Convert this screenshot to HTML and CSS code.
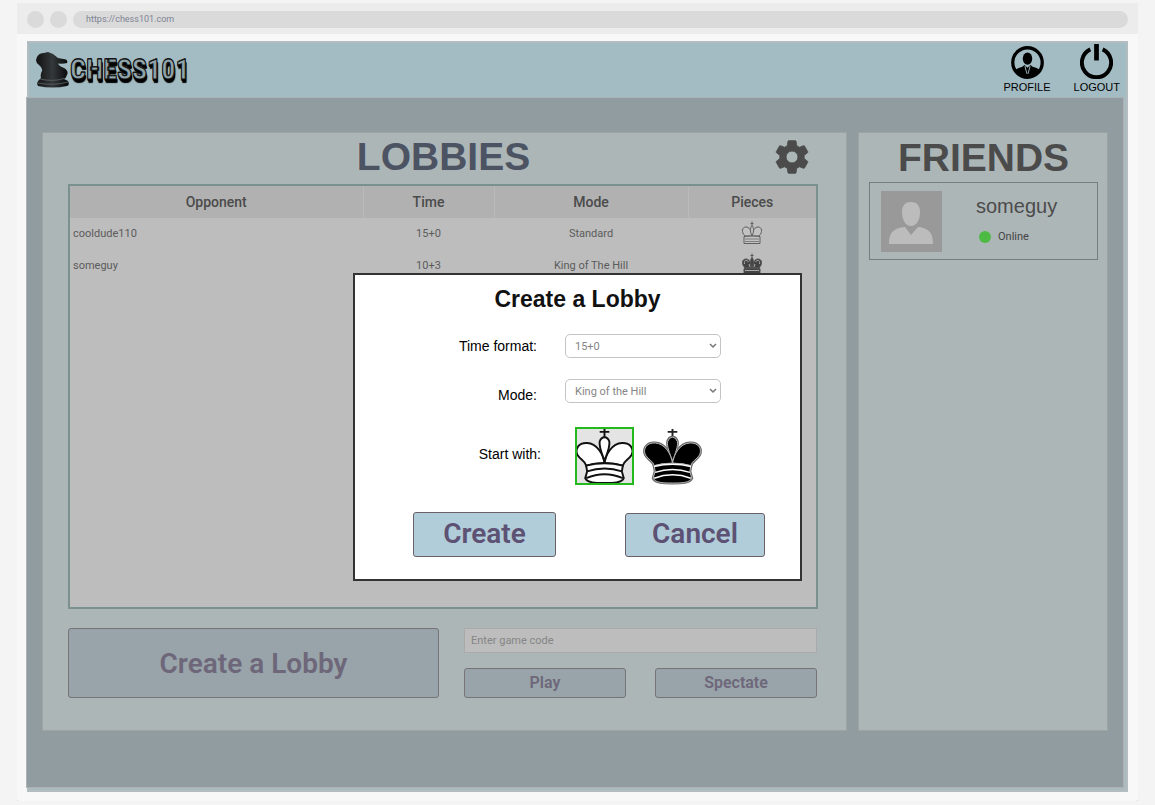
FILE: index.html
```html
<!DOCTYPE html>
<html lang="en">
<head>
<meta charset="utf-8">
<title>Chess101</title>
<link rel="stylesheet" href="styles.css">
</head>
<body>
<svg class="defs" width="0" height="0" aria-hidden="true">
  <symbol id="crown" viewBox="0 0 56 56" overflow="visible">
    <path d="M28 36C27 26 20 15 10 14.500C1 14 -3 21 0 27C3 32 8 33 9 38Q18 35 28 35.500Z"/>
    <path d="M28 36C29 26 36 15 46 14.500C55 14 59 21 56 27C53 32 48 33 47 38Q38 35 28 35.500Z"/>
    <path d="M28 33C25 25 22 18 23 13Q24.500 8.500 28 8.500T33 13C34 18 31 25 28 33Z"/>
    <path d="M9 38Q28 33 47 38L46 44L48 51C46 56 37 56 28 56S10 56 8 51L10 44Z"/>
  </symbol>
  <symbol id="mini-king" viewBox="0 0 20 24">
    <path d="M10 .500V5M8.500 2.500H11.500" fill="none"/>
    <path d="M3 15C-1 11 0 6 4 6C7 6 9 9 10 15Z"/>
    <path d="M17 15C21 11 20 6 16 6C13 6 11 9 10 15Z"/>
    <path d="M10 15C7.500 10 8.500 6 10 4.500C11.500 6 12.500 10 10 15Z"/>
    <path d="M2 15.500Q10 14.500 18 15.500V22.500H2Z"/>
  </symbol>
</svg>

<div class="browser">
  <div class="toolbar">
    <span class="dot"></span>
    <span class="dot"></span>
    <div class="address">https://chess101.com</div>
  </div>
  <div class="viewport">
    <div class="app">
      <header class="header">
        <a class="logo" href="#">
          <svg class="logo-mark" viewBox="0 0 34 36" aria-hidden="true">
            <defs><linearGradient id="ink"><stop offset="0" stop-color="#111"/><stop offset=".5" stop-color="#34383a"/><stop offset="1" stop-color="#060606"/></linearGradient></defs>
            <path fill="url(#ink)" d="M1 5Q3 1 8 1L12 0L17 2L22 6L30 7.500Q32 9 31 11Q27 12 22 11.500Q23 14 28 16Q33 19 31 23Q30 26 28 27L32 29Q34 33 31 34Q17 37 2 34Q0 31 3 28L5 26Q4 22 6 19Q7 16 3 13Q0 11 0 8Z"/>
            <path d="M4 27Q17 30 28 26.500M2 31Q17 34 32 30" fill="none" stroke="#5d676b" stroke-width=".8"/>
          </svg>
          <span class="logo-text">CHESS101</span>
        </a>
        <nav class="nav">
          <a href="#" class="nav-item">
            <svg viewBox="0 0 32 32" aria-hidden="true">
              <defs><clipPath id="disc"><circle cx="16" cy="16" r="14"/></clipPath></defs>
              <g clip-path="url(#disc)">
                <path d="M2 32V25Q4 22 11 20L13 18.500L16 21L19 18.500L21 20Q28 22 30 25V32Z"/>
                <path d="M13.500 19.500L15.500 27M18.500 19.500L16.500 27" stroke="#a3bbc3" stroke-width=".9"/>
              </g>
              <ellipse cx="16" cy="12.200" rx="4.600" ry="6"/>
              <circle cx="16" cy="16" r="14.300" fill="none" stroke="#000" stroke-width="3.200"/>
            </svg>
            PROFILE
          </a>
          <a href="#" class="nav-item">
            <svg class="power" viewBox="0 0 32 34" aria-hidden="true">
              <path d="M10 5.200A14.200 14.200 0 1 0 22 5.200" fill="none" stroke="#000" stroke-width="3.800"/>
              <path d="M16 0V16" stroke="#000" stroke-width="4.600"/>
            </svg>
            LOGOUT
          </a>
        </nav>
      </header>

      <main class="main">
        <section class="panel lobbies">
          <div class="lobbies-head">
            <h1 class="heading lobbies-title">LOBBIES</h1>
            <button class="gear" aria-label="Settings">
              <svg viewBox="2 2 20 20" aria-hidden="true"><path stroke="#4b4b4b" stroke-width=".5" stroke-linejoin="round" d="M19.140 12.940c.04-.3.06-.61.06-.94s-.02-.64-.07-.94l2.030-1.580c.18-.14.23-.41.12-.61l-1.920-3.320c-.12-.22-.37-.29-.59-.22l-2.390.96c-.5-.38-1.030-.7-1.620-.94l-.36-2.540c-.04-.24-.24-.41-.48-.41h-3.840c-.24 0-.43.17-.47.41l-.36 2.540c-.59.24-1.130.57-1.620.94l-2.390-.96c-.22-.08-.47 0-.59.22L2.740 8.870c-.12.21-.08.47.12.61l2.030 1.580c-.05.3-.09.63-.09.94s.02.64.07.94l-2.030 1.580c-.18.14-.23.41-.12.61l1.920 3.320c.12.22.37.29.59.22l2.390-.96c.5.38 1.030.7 1.620.94l.36 2.540c.05.24.24.41.48.41h3.840c.24 0 .44-.17.47-.41l.36-2.540c.59-.24 1.130-.56 1.620-.94l2.390.96c.22.08.47 0 .59-.22l1.920-3.320c.12-.22.07-.47-.12-.61zM12 15.500a3.500 3.500 0 1 1 0-7 3.500 3.500 0 0 1 0 7z"/></svg>
            </button>
          </div>
          <div class="table-box">
            <table class="table">
              <colgroup><col class="c-opp"><col class="c-time"><col class="c-mode"><col class="c-pieces"></colgroup>
              <thead><tr><th>Opponent</th><th>Time</th><th>Mode</th><th>Pieces</th></tr></thead>
              <tbody>
                <tr><td>cooldude110</td><td>15+0</td><td>Standard</td><td><svg class="mini" role="img" aria-label="White" viewBox="0 0 20 24"><use href="#mini-king"/><path d="M3 18H17M3 20.500H17" stroke-width=".7"/></svg></td></tr>
                <tr><td>someguy</td><td>10+3</td><td>King of The Hill</td><td><svg class="mini mini-black" role="img" aria-label="Black" viewBox="0 0 20 24"><use href="#mini-king"/><path d="M2.500 11C1.500 7 5 6.500 6.500 9M17.500 11C18.500 7 15 6.500 13.500 9M8 14L7 11M12 14L13 11M3 17.500H17" fill="none" stroke="#aaa"/></svg></td></tr>
              </tbody>
            </table>
          </div>
          <div class="actions">
            <button class="btn btn-muted btn-large">Create a Lobby</button>
            <div class="join">
              <input class="code" type="text" placeholder="Enter game code" aria-label="Enter game code">
              <div class="join-buttons">
                <button class="btn btn-muted">Play</button>
                <button class="btn btn-muted">Spectate</button>
              </div>
            </div>
          </div>
        </section>

        <aside class="panel friends">
          <h2 class="heading">FRIENDS</h2>
          <div class="friend">
            <svg class="avatar" viewBox="0 0 61 61" aria-hidden="true">
              <path fill="#999" d="M0 0H61V61H0Z"/>
              <path fill="#bcbcbc" d="M30 11C37 11 39 16 39 21C39 28 36 35 30 35S21 28 21 21C21 16 23 11 30 11ZM8 53C8 42 12 37 24 36L30 44L37 36C48 37 52 42 52 53Z"/>
            </svg>
            <div class="friend-info">
              <div class="friend-name">someguy</div>
              <div class="status"><span class="status-dot"></span>Online</div>
            </div>
          </div>
        </aside>
      </main>

      <form class="dialog" role="dialog" aria-labelledby="dialog-title">
        <h2 class="dialog-title" id="dialog-title">Create a Lobby</h2>
        <div class="field">
          <label for="time">Time format:</label>
          <select id="time"><option>15+0</option><option>10+3</option></select>
        </div>
        <div class="field field-mode">
          <label for="mode">Mode:</label>
          <select id="mode"><option>King of the Hill</option><option>Standard</option></select>
        </div>
        <div class="field field-side" role="radiogroup" aria-labelledby="side-label">
          <span id="side-label" class="side-label">Start with:</span>
          <div class="sides">
            <label class="side">
              <input type="radio" name="side" aria-label="White" checked>
              <svg class="king king-white" viewBox="0 0 56 56" aria-hidden="true">
                <path d="M28 0V9M23 3H33"/>
                <use href="#crown"/>
                <path d="M10 44Q28 38 46 44M9 51Q28 43 47 51" fill="none"/>
              </svg>
            </label>
            <label class="side">
              <input type="radio" name="side" aria-label="Black">
              <svg class="king king-black" viewBox="0 0 56 56" aria-hidden="true">
                <path d="M28 0V9M23 3H33" stroke="#222" stroke-width="2"/>
                <use href="#crown" class="rim"/>
                <use href="#crown" class="core"/>
                <path d="M9 39Q28 34 47 39M10 45Q28 39 46 45M9 51Q28 44 47 51" fill="none" stroke="#fff" stroke-width="1.600"/>
              </svg>
            </label>
          </div>
        </div>
        <div class="dialog-buttons">
          <button type="button" class="btn btn-create">Create</button>
          <button type="button" class="btn btn-cancel">Cancel</button>
        </div>
      </form>
    </div>
  </div>
</div>
</body>
</html>
```
FILE: styles.css
```css
* { box-sizing: border-box; }
body {
  margin: 3px 17px 4px;
  background: #f4f4f4;
  font-family: Roboto, "Liberation Sans", sans-serif;
  font-size: 11px;
  color: #555;
}
button, input, select { font-family: inherit; margin: 0; }
.defs { position: absolute; }

.browser {
  background: #f8f8f8;
  border-radius: 2px;
  box-shadow: 0 1px 2px #bbb;
}
.toolbar {
  display: flex;
  align-items: center;
  gap: 6px;
  height: 31px;
  padding: 2px 10px 0;
  background: #ececec;
}
.dot { width: 17px; height: 17px; border-radius: 50%; background: #dadada; }
.address {
  flex: 1;
  height: 17px;
  padding-left: 13px;
  border-radius: 9px;
  background: #dadada;
  color: #7d8494;
  font-size: 9px;
  line-height: 17px;
}
.viewport { padding: 7px 10px 9px; }

.app {
  position: relative;
  border: 2px solid #b3bcbe;
  background: #a9bac1;
}
.header {
  display: flex;
  justify-content: space-between;
  height: 54px;
  padding: 0 6px 0 7px;
  background: #a3bbc3;
}
.logo { display: flex; align-items: center; text-decoration: none; }
.logo-mark { width: 34px; height: 36px; }
.logo-text {
  font: 700 28px/50px "Liberation Sans Narrow", "Roboto Condensed", Roboto, sans-serif;
  color: #8fa4ab;
  -webkit-text-stroke: 1px #111;
  text-shadow: 0 -1px 0 #222, 0 1px 0 #000, 0 2px 0 #000, 1px 3px 0 #000, 1px 4px 1px #000;
}
.nav { display: flex; gap: 23px; }
.nav-item {
  display: flex;
  flex-direction: column;
  align-items: center;
  color: #000;
  font: 11px/14px "Liberation Sans", sans-serif;
  text-decoration: none;
}
.nav-item svg { width: 33px; height: 33px; margin: 3px 0 1px; }
.nav-item .power { height: 35px; margin: 1px 0; }

.main {
  display: grid;
  grid-template-columns: 805fr 250fr;
  gap: 11px;
  margin: 0 2px 2px -3px;
  padding: 34px 15px 56px;
  border: 1px solid #adb3b4;
  background: #919ca1;
}
.panel { border: 1px solid #9da4a4; background: #adb6b7; }
.heading {
  margin: 0;
  color: #4b4b4b;
  font: bold 39px/48px "Liberation Sans", sans-serif;
  text-align: center;
}
.lobbies { padding: 0 28px 32px 25px; }
.lobbies-head {
  display: grid;
  grid-template-columns: 1fr auto 1fr;
  align-items: center;
  height: 51px;
  padding: 0 9px 3px 10px;
}
.lobbies-title { grid-column: 2; color: #4c5362; }
.gear {
  justify-self: end;
  padding: 0;
  border: 0;
  background: none;
}
.gear svg { display: block; width: 34px; height: 34px; fill: #4b4b4b; }

.table-box {
  min-height: 425px;
  border: 2px solid #7b918f;
  background: #bdbdbd;
}
.table { width: 100%; border-collapse: collapse; table-layout: fixed; }
.c-opp { width: 293px; }
.c-time { width: 131px; }
.c-mode { width: 194px; }
.table th {
  height: 32px;
  padding: 0;
  border-right: 1px solid #bababa;
  background: #b1b1b1;
  color: #4b4b4b;
  font-size: 14px;
  font-weight: 500;
}
.table th:last-child { border-right: 0; }
.table td { height: 32px; padding: 0 4px 2px; text-align: center; color: #5b5b5b; }
.table td:first-child { padding-left: 3px; text-align: left; }
.mini {
  display: block;
  width: 20px;
  height: 24px;
  margin: auto;
  fill: #c2c2c2;
  stroke: #606060;
}
.mini-black { fill: #444; stroke: #555; }

.actions {
  display: grid;
  grid-template-columns: 371fr 353fr;
  gap: 25px;
  margin-top: 19px;
  padding-right: 1px;
}
.btn {
  padding: 0 0 2px;
  border: 1px solid #6b6068;
  border-radius: 3px;
  background: #b1cdd9;
  color: #5d5174;
  font-size: 28px;
  font-weight: 600;
}
.btn-muted {
  border-color: #787376;
  background: #98a4aa;
  color: #6e677a;
  font-size: 16px;
}
.btn-large { padding: 0; font-size: 28px; }
.join { display: flex; flex-direction: column; gap: 15px; }
.code {
  width: 100%;
  height: 25px;
  padding: 0 6px;
  border: 1px solid #aaa;
  background: #bdbdbd;
  font-size: 11px;
}
.code::placeholder { color: #858585; }
.join-buttons { display: grid; grid-template-columns: 1fr 1fr; gap: 29px; }
.join-buttons .btn { height: 30px; }

.friends { padding: 1px 9px 0 10px; }
.friend {
  display: flex;
  align-items: center;
  height: 78px;
  padding-left: 11px;
  border: 1px solid #737d82;
}
.avatar { width: 61px; height: 61px; }
.friend-info { padding: 0 0 0 34px; }
.friend-name { color: #4b4b4b; font: 20px/32px "Liberation Sans", sans-serif; }
.status {
  display: flex;
  align-items: center;
  gap: 7px;
  padding-left: 3px;
  color: #444;
  line-height: 30px;
}
.status-dot { width: 12px; height: 12px; border-radius: 50%; background: #4dbb43; }

.dialog {
  position: absolute;
  top: 230px;
  left: 0;
  right: 0;
  width: 449px;
  margin: 0 auto;
  padding: 10px 0 22px;
  border: 2px solid #333;
  background: #fff;
  color: #000;
  font: 14px/24px "Liberation Sans", sans-serif;
}
.dialog-title { margin: 0 0 21px; color: #111; font-size: 23px; line-height: 28px; text-align: center; }
.field {
  display: grid;
  grid-template-columns: 182px 156px;
  gap: 28px;
  align-items: center;
  text-align: right;
}
.field select {
  appearance: none;
  height: 24px;
  padding: 0 9px;
  border: 1px solid #c4c4c4;
  border-radius: 5px;
  background: #fff url("data:image/svg+xml,%3Csvg xmlns='http://www.w3.org/2000/svg' width='8' height='6'%3E%3Cpath d='M1 1l3 3 3-3' fill='none' stroke='%23777' stroke-width='1.500'/%3E%3C/svg%3E") no-repeat right 3px center;
  color: #858585;
  font: 11px Roboto, sans-serif;
}
.field-mode { align-items: start; margin-top: 21px; }
.field-mode label { padding-top: 4px; }
.field-side { grid-template-columns: 186px auto; gap: 34px; margin-top: 20px; }
.side-label { padding-bottom: 4px; }
.sides { display: flex; gap: 9px; }
.side { position: relative; width: 59px; height: 58px; border: 2px solid transparent; }
.side:has(:checked) { border-color: #24b91c; background: #e4e4e4; }
.side input { position: absolute; inset: 0; width: 100%; height: 100%; margin: 0; opacity: 0; }
.king { display: block; width: 100%; height: 100%; overflow: visible; }
.king-white { overflow: hidden; fill: #fff; stroke: #111; stroke-width: 2; }
.king-black .rim { fill: #000; stroke: #666; stroke-width: 3; }
.king-black .core { fill: #000; stroke: #bbb; stroke-width: 1; }
.dialog-buttons {
  display: flex;
  align-items: center;
  gap: 69px;
  margin-top: 27px;
  padding-left: 58px;
}
.btn-create { width: 143px; height: 45px; }
.btn-cancel { width: 140px; height: 44px; }
.dialog .btn { font-family: Roboto, sans-serif; }
```
